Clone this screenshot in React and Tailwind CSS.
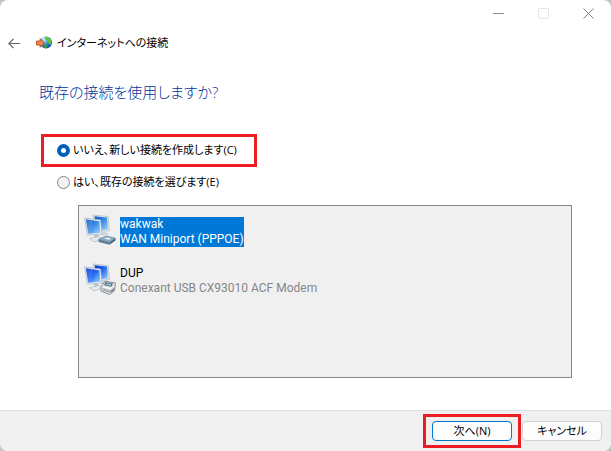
import { useState } from 'react';

function GlobeIcon() {
  return (
    <svg width="16" height="14" viewBox="0 0 16 14" aria-hidden="true">
      <defs>
        <radialGradient id="globe" cx="0.35" cy="0.3" r="0.8">
          <stop offset="0" stopColor="#b5e6fc" />
          <stop offset="0.5" stopColor="#2f86dc" />
          <stop offset="1" stopColor="#123f96" />
        </radialGradient>
      </defs>
      <circle cx="10" cy="6.5" r="6" fill="url(#globe)" />
      <path d="M10 .8c3 0 5 2 5.600 4.500L14.500 9l-2-2-1.500-2L9.500 3z" fill="#5fc43a" />
      <path d="M8 8.500l2.500.5 1 1.500-1 1.700-2.500-1.200z" fill="#3f9c35" />
      <path d="M6 2.500L9 1 8.500 3 6.500 4.500z" fill="#c9f0ff" />
      <path d="M.5 5h3.700V2.700L8.300 7l-4.100 4.300V9H.5z" fill="#f08a4b" stroke="#b8481b" strokeWidth="0.9" />
    </svg>
  );
}

function Monitors({ id, top, bottom }) {
  return (
    <>
      <defs>
        <linearGradient id={id} x1="0" y1="0" x2="1" y2="1">
          <stop offset="0" stopColor={top} />
          <stop offset="0.5" stopColor={bottom} />
          <stop offset="1" stopColor="#a8d8fb" />
        </linearGradient>
      </defs>
      <path d="M9 1l15 1.500 1.500 14-13 1.500z" fill="#e8edf2" stroke="#a9b7c4" strokeWidth="0.7" />
      <path d="M10.500 2.300l12.500 1.200 1.200 12-11 1z" fill={`url(#${id})`} />
      <path d="M15 18l6-.5 4 2.500-6 2.500z" fill="#cfd7df" />
      <path d="M.6 4l15.900 2 1.500 14L3.500 21z" fill="#f1f4f7" stroke="#a3b1be" strokeWidth="0.7" />
      <path d="M1.900 5.300l13.400 1.900 1.200 11.600-12.300.9z" fill={`url(#${id})`} />
      <path d="M1.900 5.300l7 1-2.400 13.300-2.300.1z" fill="#fff" opacity="0.12" />
      <path d="M10 20.600l4-.3.700 3-4 .5z" fill="#b4c0cb" />
      <path d="M5.500 24.500l9-2 4.500 2.200-9 3.300z" fill="#e5eaef" stroke="#abb7c2" strokeWidth="0.7" />
    </>
  );
}

function WanIcon() {
  return (
    <svg width="32" height="32" viewBox="0 0 32 32" className="shrink-0" aria-hidden="true">
      <Monitors id="wanScreen" top="#1456c4" bottom="#3b8fe8" />
      <path d="M14.500 25.500l8-3.500 9 2.300-6 4.200z" fill="#8fabc0" stroke="#5f7f99" strokeWidth="0.7" />
      <path d="M14.500 25.500l11 3v2.300l-11-2.700z" fill="#5b7d97" />
      <path d="M25.500 28.500l6-4.200v2.200l-6 4.300z" fill="#456780" />
      <path d="M20 24.500l3-1.300 4.500 1.200-2.500 1.600z" fill="#d8e6f0" />
    </svg>
  );
}

function ModemIcon() {
  return (
    <svg width="32" height="32" viewBox="0 0 32 32" className="shrink-0" aria-hidden="true">
      <Monitors id="modemScreen" top="#0a2fd0" bottom="#2670f2" />
      <path d="M17 24l4-6 10.500 2-1 7.500-5 4L17 28z" fill="#e3e5e7" stroke="#7c848b" strokeWidth="0.9" />
      <path d="M21.500 19l7.500 1.500-1.500 3.300-7.500-1.600z" fill="#5c6a76" />
      <path d="M22.700 20.200l4.800 1-.8 1.500-4.800-1z" fill="#8fc7ee" />
      <path d="M18.500 25l7.500 2.200v2.600L18.500 27.500z" fill="#a9afb5" />
      <path d="M26.500 27.500l4-3v2.800l-4 3.200z" fill="#7f8a94" />
      <path d="M19.500 24l6.500 1.700 2-1.700" fill="none" stroke="#fff" strokeWidth="0.9" />
    </svg>
  );
}

const connections = [
  { name: 'wakwak', device: 'WAN Miniport (PPPOE)', Icon: WanIcon },
  { name: 'DUP', device: 'Conexant USB CX93010 ACF Modem', Icon: ModemIcon },
];

const choices = [
  { value: 'new', label: 'いいえ、新しい接続を作成します(C)' },
  { value: 'existing', label: 'はい、既存の接続を選びます(E)' },
];

export default function App() {
  const [choice, setChoice] = useState('new');
  const [selected, setSelected] = useState('wakwak');

  return (
    <div className="min-h-screen bg-[#c4c4c4] font-['Open_Sans','Noto_Sans_CJK_JP',sans-serif] text-[11px] text-black [font-feature-settings:'palt']">
      <div className="flex min-h-screen flex-col overflow-hidden rounded-lg bg-white">
        <div className="flex h-[26px] justify-end">
          <button aria-label="最小化" className="flex w-[45px] items-center justify-center">
            <svg width="11" height="11" viewBox="0 0 11 11" stroke="#8a8a8a">
              <path d="M0 5.500h11" />
            </svg>
          </button>
          <button aria-label="最大化" disabled className="flex w-[45px] items-center justify-center">
            <svg width="11" height="11" viewBox="0 0 11 11" fill="none" stroke="#e6e6e6">
              <rect x="0.5" y="0.5" width="10" height="10" rx="1" />
            </svg>
          </button>
          <button aria-label="閉じる" className="flex w-[45px] items-center justify-center">
            <svg width="11" height="11" viewBox="0 0 11 11" stroke="#808080">
              <path d="M.5.5l10 10M10.500.5l-10 10" />
            </svg>
          </button>
        </div>

        <header className="flex h-[34px] items-center pl-2">
          <button aria-label="戻る" className="mr-4">
            <svg width="12" height="11" viewBox="0 0 12 11" fill="none" stroke="#666" strokeWidth="1.2">
              <path d="M12 5.500H1M5.500 .8L.8 5.500l4.700 4.700" />
            </svg>
          </button>
          <GlobeIcon />
          <span className="ml-[5px]">インターネットへの接続</span>
        </header>

        <main className="flex-1 px-[39px]">
          <h1 className="mt-5 text-[15px] leading-6 font-light text-[#003399]">既存の接続を使用しますか?</h1>

          <fieldset className="mt-[30px] ml-0.5">
            <div className="flex h-[33px] w-54 items-center border-3 border-[#ed1c24] pl-[13px]">
              <Choice {...choices[0]} current={choice} onChange={setChoice} />
            </div>
            <div className="flex h-[30px] items-center pl-4">
              <Choice {...choices[1]} current={choice} onChange={setChoice} />
            </div>
          </fieldset>

          <ul role="listbox" aria-label="接続" className="mt-2 ml-[39px] h-[173px] border border-[#828790] bg-[#f0f0f0] pt-2 pl-[5px] font-['Roboto','Noto_Sans_CJK_JP',sans-serif] text-xs">
            {connections.map(({ name, device, Icon }) => (
              <li
                key={name}
                role="option"
                aria-selected={selected === name}
                onClick={() => setSelected(name)}
                className="flex h-[49px] items-start gap-1"
              >
                <Icon />
                <div className={selected === name ? 'mt-[3px] bg-[#0078d7] text-white' : 'mt-[3px]'}>
                  <p className="leading-[15px]">{name}</p>
                  <p className={selected === name ? 'leading-[15px]' : 'leading-[15px] text-[#868686]'}>{device}</p>
                </div>
              </li>
            ))}
          </ul>
        </main>

        <footer className="flex h-[41px] items-center justify-end border-t border-[#dfdfdf] bg-[#f0f0f0] pr-[9px]">
          <div className="border-3 border-[#ed1c24] px-1.5 py-1">
            <button className="block h-5 w-20 rounded border border-[#0078d4] bg-[#fdfdfd] leading-4">次へ(N)</button>
          </div>
          <button className="ml-px h-5 w-20 rounded border border-[#d0d0d0] bg-[#fdfdfd] leading-4">キャンセル</button>
        </footer>
      </div>
    </div>
  );
}

function Choice({ value, label, current, onChange }) {
  return (
    <label className="flex items-center gap-[3px]">
      <input
        type="radio"
        name="connection"
        value={value}
        checked={current === value}
        onChange={() => onChange(value)}
        className="size-[13px] appearance-none rounded-full border border-[#858585] bg-[#f3f3f3] checked:border-4 checked:border-[#005fb8] checked:bg-white"
      />
      {label}
    </label>
  );
}
